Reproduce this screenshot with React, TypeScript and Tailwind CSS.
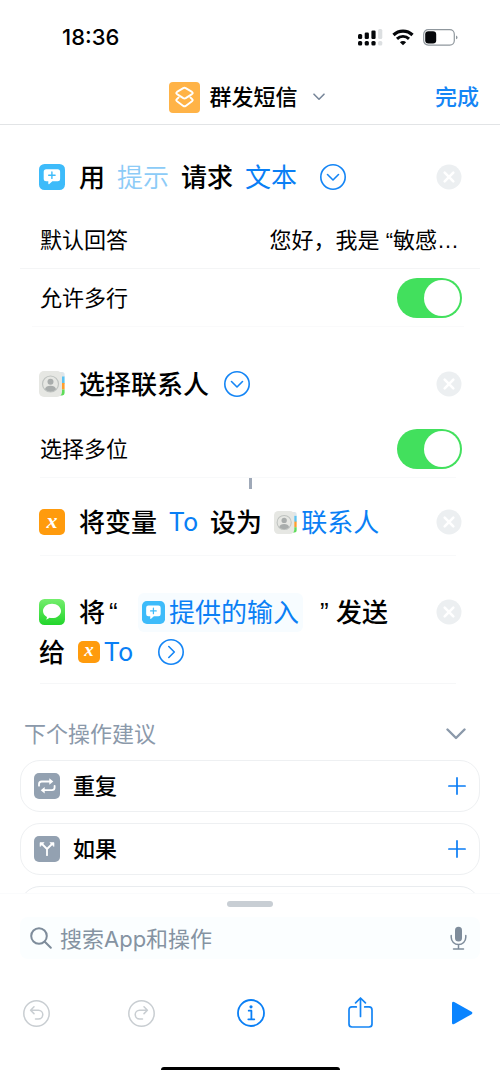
import React, { useState } from "react";

function ShortcutsLogo() {
  return (
    <svg viewBox="0 0 31 31" className="h-[31px] w-[31px] shrink-0" fill="none">
      <rect width="31" height="31" rx="4" fill="#ffb347" />
      <g stroke="#fff" strokeWidth="1.9" strokeLinejoin="round" strokeLinecap="round">
        <path d="M14.3 6.1 8 9.9q-1.5 1.1 0 2.200l6.300 4q1.200.7 2.400 0l6.300-4q1.500-1.100 0-2.200l-6.300-3.800q-1.200-.7-2.400 0Z" />
        <path d="M9.600 15.600 8 16.900q-1.500 1.200 0 2.300l6.300 4.700q1.200.8 2.400 0l6.300-4.700q1.500-1.100 0-2.300l-1.600-1.300" />
      </g>
    </svg>
  );
}

function PromptIcon({ className }: { className: string }) {
  return (
    <svg viewBox="0 0 26 26" className={`shrink-0 ${className}`}>
      <rect width="26" height="26" rx="5.5" fill="#3dbbfa" />
      <path
        d="M7.2 5.2h11.400a2.500 2.500 0 0 1 2.500 2.500v7a2.500 2.500 0 0 1-2.500 2.500h-5.200l-3.100 2.900c-.5.4-1 .2-1-.5v-2.400H7.200a2.500 2.500 0 0 1-2.500-2.500v-7a2.500 2.500 0 0 1 2.500-2.500Z"
        fill="#fff"
      />
      <path d="M12.900 8v6.400M9.700 11.200h6.400" stroke="#3dbbfa" strokeWidth="1.4" strokeLinecap="round" />
    </svg>
  );
}

function ContactIcon({ className }: { className: string }) {
  return (
    <svg viewBox="0 0 26 26" className={`shrink-0 ${className}`} fill="none">
      <path d="M21 1h2.200A2.400 2.400 0 0 1 25.600 3.500V6H21Z" fill="#dfe6ea" />
      <path d="M21 5.500h4.600v7H21Z" fill="#5cc3f2" />
      <path d="M21 12h4.600v6.500H21Z" fill="#ff9d2e" />
      <path d="M21 18.500h4.600V22a2.400 2.400 0 0 1-2.400 2.400H21Z" fill="#5fdc5a" />
      <rect width="23" height="26" rx="5" fill="#e6e7e3" />
      <circle cx="11.500" cy="13" r="8" stroke="#bfc3c0" strokeWidth="1.200" />
      <circle cx="11.500" cy="10.700" r="3" fill="#a9adac" />
      <path d="M5.900 18.300c.5-2.500 2.700-3.500 5.600-3.500s5.100 1 5.600 3.500a7.700 7.700 0 0 1-11.200 0Z" fill="#a9adac" />
    </svg>
  );
}

function MessageIcon() {
  return (
    <svg viewBox="0 0 26 26" className="h-[26px] w-[26px] shrink-0">
      <defs>
        <linearGradient id="msg" x1="0" y1="0" x2="0" y2="1">
          <stop offset="0" stopColor="#74ee6d" />
          <stop offset="1" stopColor="#22d52b" />
        </linearGradient>
      </defs>
      <rect width="26" height="26" rx="5.5" fill="url(#msg)" />
      <path
        d="M13 4.700c5 0 9 3.200 9 7.200s-4 7.200-9 7.200c-.9 0-1.700-.1-2.500-.3-.8.900-2 1.500-3.600 1.600.7-.6 1.100-1.500 1-2.500C5.500 16.600 4 14.400 4 11.900c0-4 4-7.200 9-7.200Z"
        fill="#fff"
      />
    </svg>
  );
}

function VariableIcon({ className }: { className: string }) {
  return (
    <span
      className={`flex shrink-0 items-center justify-center rounded-[5px] bg-[#ff9b0d] pb-1 font-['Liberation_Serif',serif] font-bold italic text-white ${className}`}
    >
      x
    </span>
  );
}

function RepeatIcon() {
  return (
    <svg viewBox="0 0 26 26" className="h-[26px] w-[26px] shrink-0" fill="none">
      <rect width="26" height="26" rx="5" fill="#93a1b1" />
      <g stroke="#fff" strokeWidth="1.8" strokeLinecap="round" strokeLinejoin="round">
        <path d="M5 12.700v-1.500q0-2.700 2.700-2.700H16" />
        <path d="M20.600 12.800v1.700q0 2.700-2.700 2.700H10" />
      </g>
      <path d="m15.300 5.300 4 3.200-4 3.200ZM10.700 14l-4 3.200 4 3.200Z" fill="#fff" />
    </svg>
  );
}

function BranchIcon() {
  return (
    <svg viewBox="0 0 26 26" className="h-[26px] w-[26px] shrink-0" fill="none">
      <rect width="26" height="26" rx="5" fill="#93a1b1" />
      <path d="M13 19.200V13L8 8M13 13l5-5" stroke="#fff" strokeWidth="1.8" strokeLinecap="round" strokeLinejoin="round" />
      <path d="M6 6.600h4.200L6 10.600ZM20 6.600h-4.200l4.200 4Z" fill="#fff" stroke="#fff" strokeWidth=".6" strokeLinejoin="round" />
    </svg>
  );
}

function CircleChevron({ label, d }: { label: string; d: string }) {
  return (
    <button type="button" aria-label={label} className="shrink-0">
      <svg viewBox="0 0 26 26" className="h-[26px] w-[26px]" fill="none" stroke="#1485f5" strokeWidth="1.6" strokeLinecap="round" strokeLinejoin="round">
        <circle cx="13" cy="13" r="12.200" />
        <path d={d} />
      </svg>
    </button>
  );
}

const DOWN = "m7.500 10.500 5.500 5.500 5.500-5.500";
const RIGHT = "m10.800 7.500 5.500 5.500-5.500 5.500";

function RemoveButton() {
  return (
    <button type="button" aria-label="移除" className="ml-auto shrink-0">
      <svg viewBox="0 0 26 26" className="h-[26px] w-[26px]" fill="none">
        <circle cx="13" cy="13" r="12.500" fill="#eceff1" />
        <path d="m8.700 8.700 8.600 8.600m0-8.600-8.600 8.600" stroke="#fff" strokeWidth="2.600" strokeLinecap="round" />
      </svg>
    </button>
  );
}

function ToggleRow({ id, label }: { id: string; label: string }) {
  const [on, setOn] = useState(true);

  return (
    <div className="flex h-[58px] items-center justify-between pl-10 pr-[38px]">
      <label htmlFor={id} className="text-[22px]">{label}</label>
      <input
        id={id}
        type="checkbox"
        role="switch"
        checked={on}
        onChange={(e) => setOn(e.target.checked)}
        className="relative h-10 w-[65px] appearance-none rounded-full bg-gray-200 before:absolute before:left-[2px] before:top-[2px] before:h-9 before:w-9 before:rounded-full before:bg-white checked:bg-[#42e05d] checked:before:left-[27px]"
      />
    </div>
  );
}

function SuggestionCard({ icon, name }: { icon: React.ReactNode; name: string }) {
  return (
    <li className="flex h-[52px] items-center rounded-[20px] border border-[#eef0f2] pl-[13px] pr-[13px]">
      {icon}
      <span className="ml-[13px] text-[22px] font-medium">{name}</span>
      <button type="button" aria-label={`添加${name}`} className="ml-auto">
        <svg viewBox="0 0 18 18" className="h-[18px] w-[18px]" stroke="#0a7cf5" strokeWidth="1.7" strokeLinecap="round">
          <path d="M9 .9v16.200M.9 9h16.200" />
        </svg>
      </button>
    </li>
  );
}

export default function App() {
  const [answer, setAnswer] = useState("您好，我是 “敏感…");
  const [query, setQuery] = useState("");

  return (
    <div className="flex h-screen flex-col bg-white font-['Inter','Noto_Sans_CJK_SC',sans-serif] text-black">
      {/* status bar */}
      <div className="flex h-[70px] shrink-0 items-center pl-[62px] pr-[42px] pt-1">
        <span className="text-[22px] font-medium">18:36</span>
        <svg viewBox="0 0 25 17" className="ml-auto h-[17px] w-[25px]" fill="#05070a">
          <rect x="0" y="5" width="4.200" height="5" rx="1.500" />
          <rect x="6.700" y="3.500" width="4.200" height="6.500" rx="1.300" />
          <rect x="13.400" y="1.500" width="4.200" height="8.500" rx="1.200" />
          <rect x="20.100" y="0" width="4.200" height="10" rx="1.500" fill="#dcdfe1" />
          <rect x="0" y="12" width="4.200" height="4.500" rx="1.500" />
          <rect x="6.700" y="12" width="4.200" height="4.500" rx="1.500" />
          <rect x="13.400" y="12" width="4.200" height="4.500" rx="1.500" />
          <rect x="20.100" y="12" width="4.200" height="4.500" rx="1.500" fill="#dcdfe1" />
        </svg>
        <svg viewBox="0 0 22 17" className="ml-[9px] h-[17px] w-[22px]" fill="none" stroke="#05070a">
          <path d="M1.500 6a13.500 13.500 0 0 1 19 0" strokeWidth="3.200" />
          <path d="M5 9.900a8.500 8.500 0 0 1 12 0" strokeWidth="2.900" />
          <path d="M11 16.300 7.900 13.200a4.400 4.400 0 0 1 6.200 0Z" fill="#05070a" stroke="none" />
        </svg>
        <svg viewBox="0 0 35 17" className="ml-[9px] h-[17px] w-[35px]" fill="none">
          <rect x=".7" y=".7" width="30.600" height="15.400" rx="4.500" stroke="#8f979d" strokeWidth="1.200" />
          <rect x="2.200" y="2.300" width="11" height="12.200" rx="3.200" fill="#05070a" />
          <path d="M33 6.500q1.500.6 1.500 1.900T33 10.300Z" fill="#8f979d" />
        </svg>
      </div>

      <header className="relative flex h-[55px] shrink-0 items-center justify-center border-b border-[#e2e4e6]">
        <button type="button" className="flex items-center">
          <ShortcutsLogo />
          <span className="ml-[9px] text-[22px] font-medium">群发短信</span>
          <svg viewBox="0 0 12 8" className="ml-[15px] mr-[6px] h-2 w-3" fill="none" stroke="#78879a" strokeWidth="1.6" strokeLinecap="round" strokeLinejoin="round">
            <path d="m1 1.200 5 5 5-5" />
          </svg>
        </button>
        <button type="button" className="absolute right-[21px] text-[22px] font-medium text-[#1485f5]">完成</button>
      </header>

      <main className="min-h-0 flex-1 overflow-y-auto [scrollbar-width:none]">
        {/* ask for input */}
        <section className="mt-8">
          <div className="flex h-10 items-center pl-[39px] pr-[38px] text-[26px] font-medium">
            <PromptIcon className="h-[26px] w-[26px]" />
            <div className="ml-[14px] mr-[23px] flex gap-3">
              <span>用</span>
              <button type="button" className="font-[350] text-[#8ccbf7]">提示</button>
              <span>请求</span>
              <button type="button" className="font-normal text-[#0a7ff5]">文本</button>
            </div>
            <CircleChevron label="收起" d={DOWN} />
            <RemoveButton />
          </div>
          <div className="mx-5 mt-4 flex h-14 items-center justify-between border-b border-[#f4f5f6] pl-5 pr-[21px] text-[22px]">
            <label htmlFor="answer" className="shrink-0">默认回答</label>
            <input
              id="answer"
              value={answer}
              onChange={(e) => setAnswer(e.target.value)}
              className="w-52 text-right font-['Liberation_Sans','Noto_Sans_CJK_SC',sans-serif] outline-none"
            />
          </div>
          <ToggleRow id="multiline" label="允许多行" />
          <div className="-mt-px ml-8 mr-9 border-b border-[#fafafb]" />
        </section>

        {/* select contact */}
        <section className="mt-[37px]">
          <div className="flex h-10 items-center pl-[39px] pr-[38px] text-[26px] font-medium">
            <ContactIcon className="h-[26px] w-[26px]" />
            <span className="ml-[14px] mr-[15px]">选择联系人</span>
            <CircleChevron label="收起" d={DOWN} />
            <RemoveButton />
          </div>
          <div className="mt-4">
            <ToggleRow id="multiple" label="选择多位" />
            <div className="-mt-px ml-10 mr-11 border-b border-[#f8f9fa]" />
          </div>
        </section>
        <div className="h-6">
          <div className="mx-auto h-[11px] w-[3px] bg-[#9fa9b8]" />
        </div>

        {/* set variable */}
        <section>
          <div className="flex h-10 items-center pl-[39px] pr-[38px] text-[26px] font-medium">
            <VariableIcon className="h-[26px] w-[26px] text-[22px]" />
            <div className="ml-[14px] flex items-center gap-3">
              <span>将变量</span>
              <button type="button" className="font-['Roboto',sans-serif] font-normal text-[#0a7ff5]">To</button>
              <span>设为</span>
              <button type="button" className="flex items-center gap-1 font-normal text-[#0a7ff5]">
                <ContactIcon className="h-[23px] w-[23px]" />
                联系人
              </button>
            </div>
            <RemoveButton />
          </div>
          <div className="ml-10 mr-11 h-[14px] border-b border-[#f8f9fa]" />
        </section>

        {/* send message */}
        <section className="mt-9">
          <div className="flex h-10 items-center pl-[39px] pr-[38px] text-[26px] font-medium">
            <MessageIcon />
            <span className="ml-[14px]">将</span>
            <span className="ml-1 w-3 font-['Liberation_Sans',sans-serif]">“</span>
            <button type="button" className="mx-[17px] flex items-center gap-1 rounded-md bg-[#f7fcff] px-1 font-normal text-[#0a7ff5]">
              <PromptIcon className="h-[23px] w-[23px]" />
              提供的输入
            </button>
            <span className="mr-1 w-3 font-['Liberation_Sans',sans-serif]">”</span>
            <span>发送</span>
            <RemoveButton />
          </div>
          <div className="flex h-10 items-center pl-[39px] text-[26px] font-medium">
            <span>给</span>
            <button type="button" className="ml-[13px] mr-[25px] flex items-center gap-1 font-['Roboto',sans-serif] font-normal text-[#0a7ff5]">
              <VariableIcon className="h-[22px] w-[22px] text-[19px]" />
              To
            </button>
            <CircleChevron label="展开" d={RIGHT} />
          </div>
          <div className="ml-10 mr-11 h-3 border-b border-[#f6f7f8]" />
        </section>

        <section className="mt-[30px] px-5">
          <div className="flex h-10 items-center justify-between pl-1 pr-[14px]">
            <h2 className="text-[22px] text-[#8b99aa]">下个操作建议</h2>
            <button type="button" aria-label="收起建议">
              <svg viewBox="0 0 20 12" className="h-3 w-5" fill="none" stroke="#8b99aa" strokeWidth="2.400" strokeLinecap="round" strokeLinejoin="round">
                <path d="m1.500 1.500 8.500 8.500 8.500-8.500" />
              </svg>
            </button>
          </div>
          <ul className="mt-[6px] flex flex-col gap-[11px]">
            <SuggestionCard icon={<RepeatIcon />} name="重复" />
            <SuggestionCard icon={<BranchIcon />} name="如果" />
            <li className="h-[52px] rounded-[20px] border border-[#e9ecef]" aria-hidden="true" />
          </ul>
        </section>
      </main>

      <footer className="shrink-0 border-t border-[#fafbfc]">
        <div className="mx-auto mt-[7px] h-[6px] w-[46px] rounded-full bg-[#c8ced4]" />
        <div className="mx-5 mt-[10px] flex h-[42px] items-center rounded-lg bg-[#fbfeff] pl-[10px] pr-[13px]">
          <svg viewBox="0 0 22 22" className="h-[22px] w-[22px] shrink-0" fill="none" stroke="#7e8c9b" strokeWidth="2" strokeLinecap="round">
            <circle cx="9" cy="9" r="7.800" />
            <path d="m14.800 14.800 6 6" />
          </svg>
          <input
            type="text"
            aria-label="搜索App和操作"
            placeholder="搜索App和操作"
            value={query}
            onChange={(e) => setQuery(e.target.value)}
            className="ml-2 min-w-0 flex-1 pt-0.5 text-[22px] outline-none placeholder:text-[#8593a2]"
          />
          <button type="button" aria-label="听写">
            <svg viewBox="0 0 17 24" className="h-6 w-[17px]" fill="none" stroke="#7e8c9b" strokeWidth="1.500" strokeLinecap="round">
              <rect x="5" y=".8" width="7" height="14.600" rx="3.500" fill="#7e8c9b" stroke="none" />
              <path d="M1.200 9.500v1.800a7.300 7.300 0 0 0 14.600 0V9.500M8.500 18.700v4M3.500 22.900h10" />
            </svg>
          </button>
        </div>

        <div className="mt-8 flex h-11 items-center justify-between pl-[23px] pr-[27px]">
          <button type="button" aria-label="撤销" disabled>
            <svg viewBox="0 0 27 27" className="h-[27px] w-[27px]" fill="none" stroke="#c9ced2" strokeWidth="1.500" strokeLinecap="round" strokeLinejoin="round">
              <circle cx="13.500" cy="13.500" r="12.700" />
              <path d="M11 6.800 7.600 10.200l3.400 3.400M7.800 10.200h7.600a4.400 4.400 0 0 1 0 8.800H12.500" />
            </svg>
          </button>
          <button type="button" aria-label="重做" disabled>
            <svg viewBox="0 0 27 27" className="h-[27px] w-[27px]" fill="none" stroke="#c9ced2" strokeWidth="1.500" strokeLinecap="round" strokeLinejoin="round">
              <circle cx="13.500" cy="13.500" r="12.700" />
              <path d="m16 6.800 3.400 3.400-3.400 3.400M19.200 10.200h-7.600a4.400 4.400 0 0 0 0 8.800h2.900" />
            </svg>
          </button>
          <button type="button" aria-label="信息" className="pl-1 pr-0.5">
            <svg viewBox="0 0 28 28" className="h-7 w-7" fill="none" stroke="#0a7ff5" strokeWidth="1.800" strokeLinecap="round">
              <circle cx="14" cy="14" r="13" />
              <path d="M11.700 11.700h2.700v8.300M11.300 20.300h6" strokeLinejoin="round" />
              <circle cx="14" cy="7.800" r="1.600" fill="#0a7ff5" stroke="none" />
            </svg>
          </button>
          <button type="button" aria-label="共享" className="pl-1">
            <svg viewBox="0 0 25 31" className="mb-[2px] h-[31px] w-[25px]" fill="none" stroke="#1485f5" strokeWidth="1.700" strokeLinecap="round" strokeLinejoin="round">
              <path d="M8.300 9.900H4q-3 0-3 3V27q0 3 3 3h17q3 0 3-3V12.900q0-3-3-3h-4.300" />
              <path d="M12.500 19.500V1.200M7.600 5.900l4.900-4.900 4.900 4.900" />
            </svg>
          </button>
          <button type="button" aria-label="运行">
            <svg viewBox="0 0 22 24" className="h-6 w-[22px]" fill="#0a84ff">
              <path d="M1 2.300v19.400Q1 24 3.200 22.900L20.600 13.200q1.600-1.200 0-2.400L3.200 1.100Q1 0 1 2.300Z" />
            </svg>
          </button>
        </div>
        <div className="mx-auto mt-8 h-[3px] w-[179px] rounded-t-full bg-black" />
      </footer>
    </div>
  );
}
